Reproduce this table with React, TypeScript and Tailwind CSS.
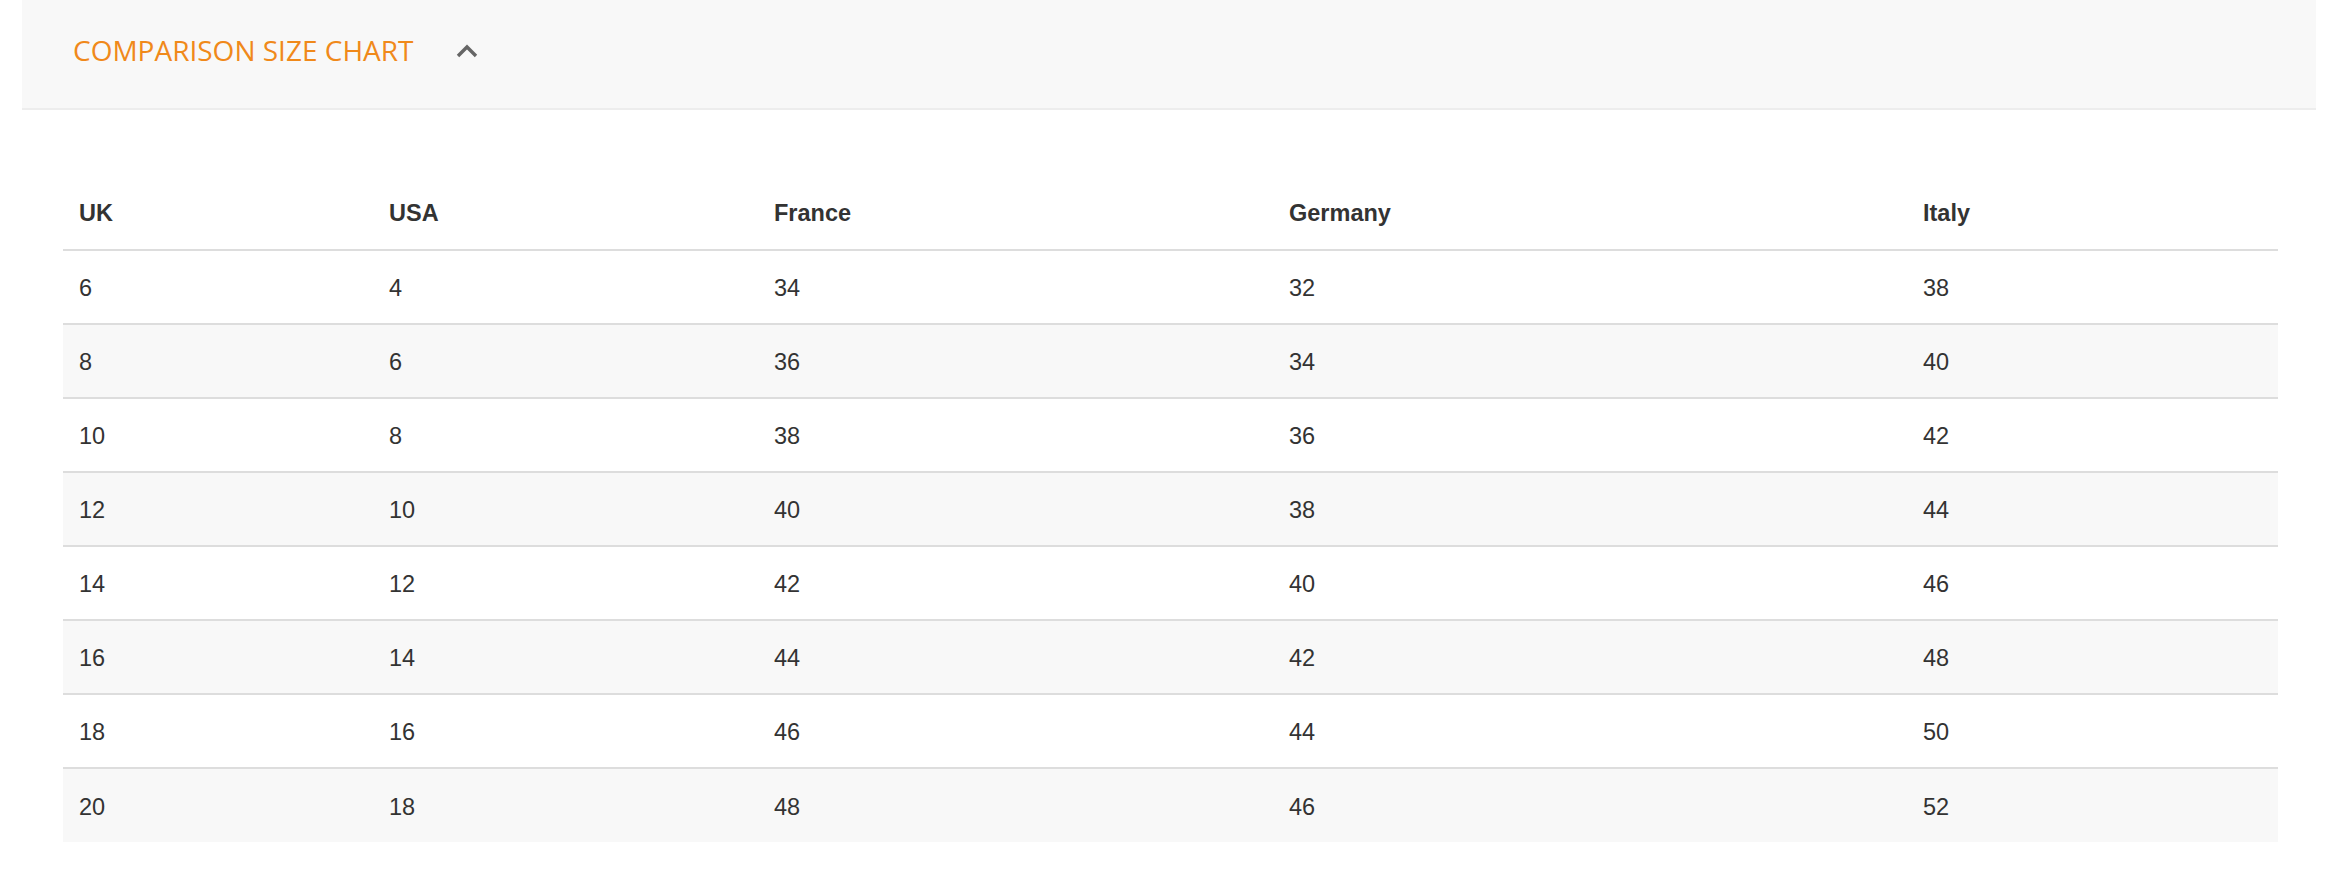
const headers = ['UK', 'USA', 'France', 'Germany', 'Italy']

const rows = [
  ['6', '4', '34', '32', '38'],
  ['8', '6', '36', '34', '40'],
  ['10', '8', '38', '36', '42'],
  ['12', '10', '40', '38', '44'],
  ['14', '12', '42', '40', '46'],
  ['16', '14', '44', '42', '48'],
  ['18', '16', '46', '44', '50'],
  ['20', '18', '48', '46', '52'],
]

// column widths read off the reference
const colWidths = ['w-[310px]', 'w-[385px]', 'w-[515px]', 'w-[634px]', 'w-auto']

export default function App() {
  return (
    <main className="min-h-screen bg-white">
      <div className="ml-[22px] mr-[12px]">
        {/* Accordion header */}
        <button
          type="button"
          className="flex h-[110px] w-full items-center gap-[43px] border-b-2 border-[#ededed] bg-[#f8f8f8] pb-[8px] pl-[51px] text-left"
        >
          <span className="font-['Open_Sans',sans-serif] text-[28px] font-normal text-[#f0891a]">
            COMPARISON SIZE CHART
          </span>
          <svg width="22" height="14" viewBox="0 0 22 14" className="mt-[1px]">
            <polyline points="2,12 11,3 20,12" fill="none" stroke="#666" strokeWidth="3.4" />
          </svg>
        </button>

        {/* Size table */}
        <div className="pl-[41px] pr-[38px] pt-[66px]">
          <table className="w-full border-collapse font-['Liberation_Sans',Arial,sans-serif] text-[23.5px] text-[#333]">
            <thead>
              <tr className="h-[74px]">
                {headers.map((h, i) => (
                  <th key={h} className={`${colWidths[i]} px-[16px] pt-[3px] text-left font-bold`}>
                    {h}
                  </th>
                ))}
              </tr>
            </thead>
            <tbody>
              {rows.map((r, ri) => (
                <tr
                  key={ri}
                  className={`h-[74px] border-t-2 border-[#dddddd] ${ri % 2 === 1 ? 'bg-[#f8f8f8]' : 'bg-white'}`}
                >
                  {r.map((c, ci) => (
                    <td key={ci} className="px-[16px] pt-[4px] align-middle">
                      {c}
                    </td>
                  ))}
                </tr>
              ))}
            </tbody>
          </table>
        </div>
      </div>
    </main>
  )
}
